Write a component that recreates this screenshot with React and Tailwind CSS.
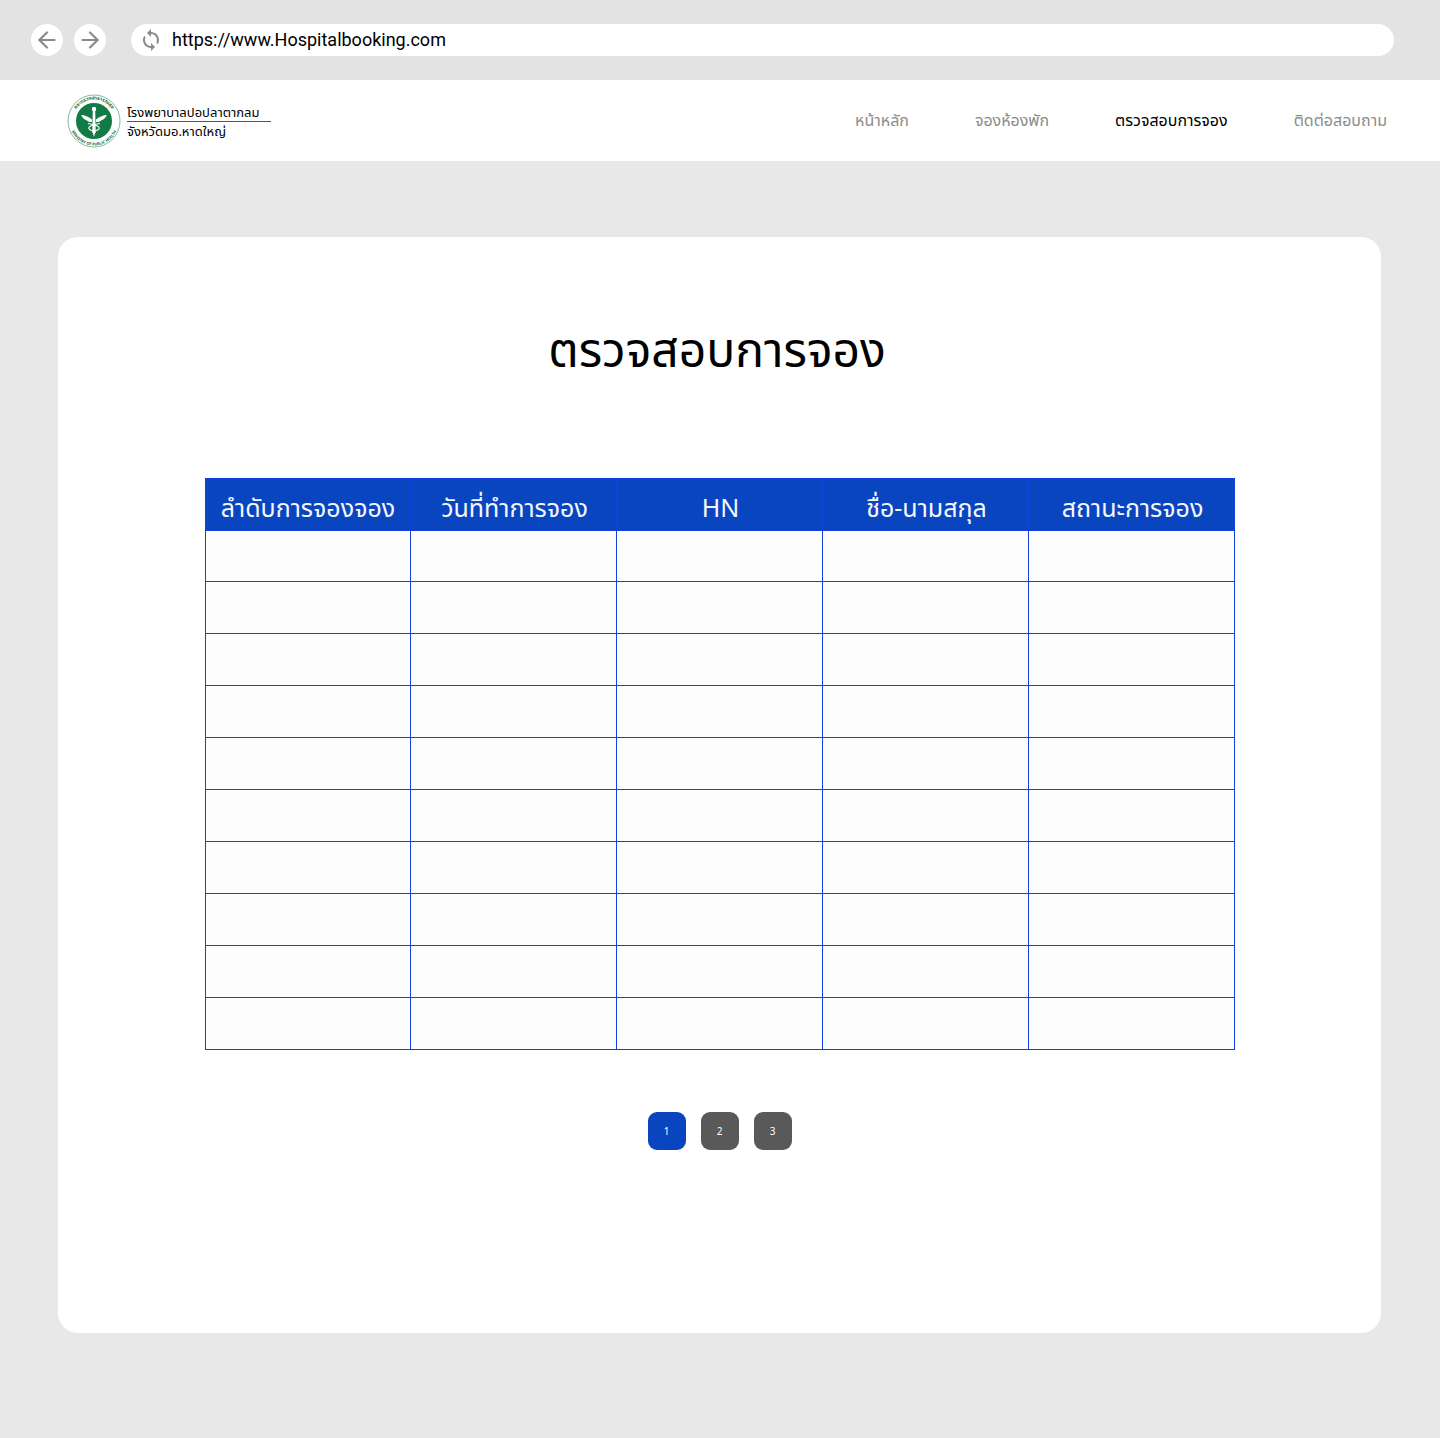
import React from 'react';
import { ArrowLeft, ArrowRight } from 'lucide-react';
import { MdSync } from 'react-icons/md';

const font = { fontFamily: '"Noto Sans", "Noto Sans Thai", "Noto Sans Thai Looped", sans-serif' };

const navItems = [
  { label: 'หน้าหลัก', active: false },
  { label: 'จองห้องพัก', active: false },
  { label: 'ตรวจสอบการจอง', active: true },
  { label: 'ติดต่อสอบถาม', active: false },
];

const columns = ['ลำดับการจองจอง', 'วันที่ทำการจอง', 'HN', 'ชื่อ-นามสกุล', 'สถานะการจอง'];
const rows = [1, 2, 3, 4, 5, 6, 7, 8, 9];

const Logo = () => (
  <svg viewBox="0 0 54 54" className="h-[54px] w-[54px] shrink-0">
    <defs>
      <path id="ringTop" d="M5.5 27a21.5 21.5 0 0 1 43 0" />
      <path id="ringBottom" d="M2.5 27a24.5 24.5 0 0 0 49 0" />
    </defs>
    <circle cx="27" cy="27" r="26" fill="#fff" stroke="#5fae84" strokeWidth="0.8" />
    <circle cx="27" cy="27" r="18" fill="#117a45" />
    <text fontSize="5" fill="#0f6b3c" fontWeight="700" style={font}>
      <textPath href="#ringTop" startOffset="50%" textAnchor="middle">กระทรวงสาธารณสุข</textPath>
    </text>
    <text fontSize="3.8" fill="#0f6b3c" fontWeight="700" style={font}>
      <textPath href="#ringBottom" startOffset="50%" textAnchor="middle">MINISTRY OF PUBLIC HEALTH</textPath>
    </text>
    {/* staff */}
    <path d="M25.8 16h2.4l.5 21-1.700 6-1.700-6z" fill="#fff" />
    <circle cx="27" cy="15" r="2.200" fill="#fff" />
    {/* wings */}
    <path d="M14 21c3.500 0 7.500 1.500 11 4.500v2.500c-2.200.3-3.800-.3-5-1.500-2.500-.8-4.800-3-6-5.500z" fill="#fff" />
    <path d="M40 21c-3.500 0-7.500 1.500-11 4.500v2.500c2.200.3 3.800-.3 5-1.500 2.500-.8 4.800-3 6-5.500z" fill="#fff" />
    {/* snakes */}
    <path d="M21 29.500c6 1.300 12 2.300 11.200 5-.7 2.200-5.500 2-7 3.800" fill="none" stroke="#fff" strokeWidth="1.100" />
    <path d="M33 29.500c-6 1.300-12 2.300-11.200 5 .7 2.200 5.500 2 7 3.800" fill="none" stroke="#fff" strokeWidth="1.100" />
  </svg>
);

const App = () => {
  return (
    <div className="min-h-[1438px] bg-[#e8e8e8]" style={font}>
      <div className="flex h-20 items-center bg-[#e3e3e3] pl-[31px] pr-[46px]">
        <div className="flex h-8 w-8 items-center justify-center rounded-full bg-white text-[#8a8a8a]">
          <ArrowLeft size={26} strokeWidth={2} />
        </div>
        <div className="ml-[11px] flex h-8 w-8 items-center justify-center rounded-full bg-white text-[#8a8a8a]">
          <ArrowRight size={26} strokeWidth={2} />
        </div>
        <div className="ml-[25px] flex h-8 flex-1 items-center rounded-full bg-white pl-2">
          <MdSync size={24} className="text-[#8a8a8a]" />
          <span className="ml-[9px] text-lg leading-none text-black" style={{ fontFamily: 'Roboto, sans-serif' }}>
            https://www.Hospitalbooking.com
          </span>
        </div>
      </div>

      <nav className="flex h-[81px] items-center justify-between bg-white pl-[67px] pr-[53px]">
        <div className="flex items-center">
          <Logo />
          <div className="ml-[6px] w-[144px] text-[13px] leading-[18px] text-black">
            <div className="mt-[1px] border-b border-[#117a45]">โรงพยาบาลปอปลาตากลม</div>
            <div>จังหวัดมอ.หาดใหญ่</div>
          </div>
        </div>
        <div className="-mt-[1px] flex items-center gap-[66px] text-base">
          {navItems.map((item) => (
            <a key={item.label} className={item.active ? 'text-black' : 'text-[#8c8c8c]'}>
              {item.label}
            </a>
          ))}
        </div>
      </nav>

      <main className="pb-[105px] pl-[58px] pr-[59px] pt-[76px]">
        <div className="h-[1096px] rounded-[20px] bg-white pt-[78px]">
          <h1 className="pr-[5px] text-center text-[48px] font-normal leading-[68px] text-black">ตรวจสอบการจอง</h1>

          <table className="ml-[147px] mt-[95px] w-[1030px] table-fixed border-collapse">
            <colgroup>
              <col className="w-[205px]" />
              <col className="w-[206px]" />
              <col className="w-[206px]" />
              <col className="w-[206px]" />
              <col />
            </colgroup>
            <thead>
              <tr className="h-[52px] bg-[#0a45c0]">
                {columns.map((col, i) => (
                  <th
                    key={col}
                    className={`border border-[#1340e0] p-0 pt-[6px] text-[25px] font-normal leading-none text-[#f5f7fc] ${i > 0 ? 'pl-[2px]' : ''}`}
                  >
                    {col}
                  </th>
                ))}
              </tr>
            </thead>
            <tbody>
              <tr className="h-[51px] bg-[#fdfdfd]">
                {columns.map((col, i) => (
                  <td key={col} className="border border-[#1340e0] p-0 text-center align-top text-[25px] leading-[28px] text-white">
                    {i === 1 ? <div className="-mt-[5px]">จอง</div> : ''}
                  </td>
                ))}
              </tr>
              {rows.map((row) => (
                <tr key={row} className="h-[52px] bg-[#fdfdfd]">
                  {columns.map((col) => (
                    <td key={col} className="border border-[#1340e0] p-0" />
                  ))}
                </tr>
              ))}
            </tbody>
          </table>

          <div className="mt-[62px] flex justify-center gap-[15px]">
            <button className="h-[38px] w-[38px] rounded-[9px] bg-[#0a45c0] text-[10px] text-white">1</button>
            <button className="h-[38px] w-[38px] rounded-[9px] bg-[#595959] text-[10px] text-white">2</button>
            <button className="h-[38px] w-[38px] rounded-[9px] bg-[#595959] text-[10px] text-white">3</button>
          </div>
        </div>
      </main>
    </div>
  );
};

export default App;
